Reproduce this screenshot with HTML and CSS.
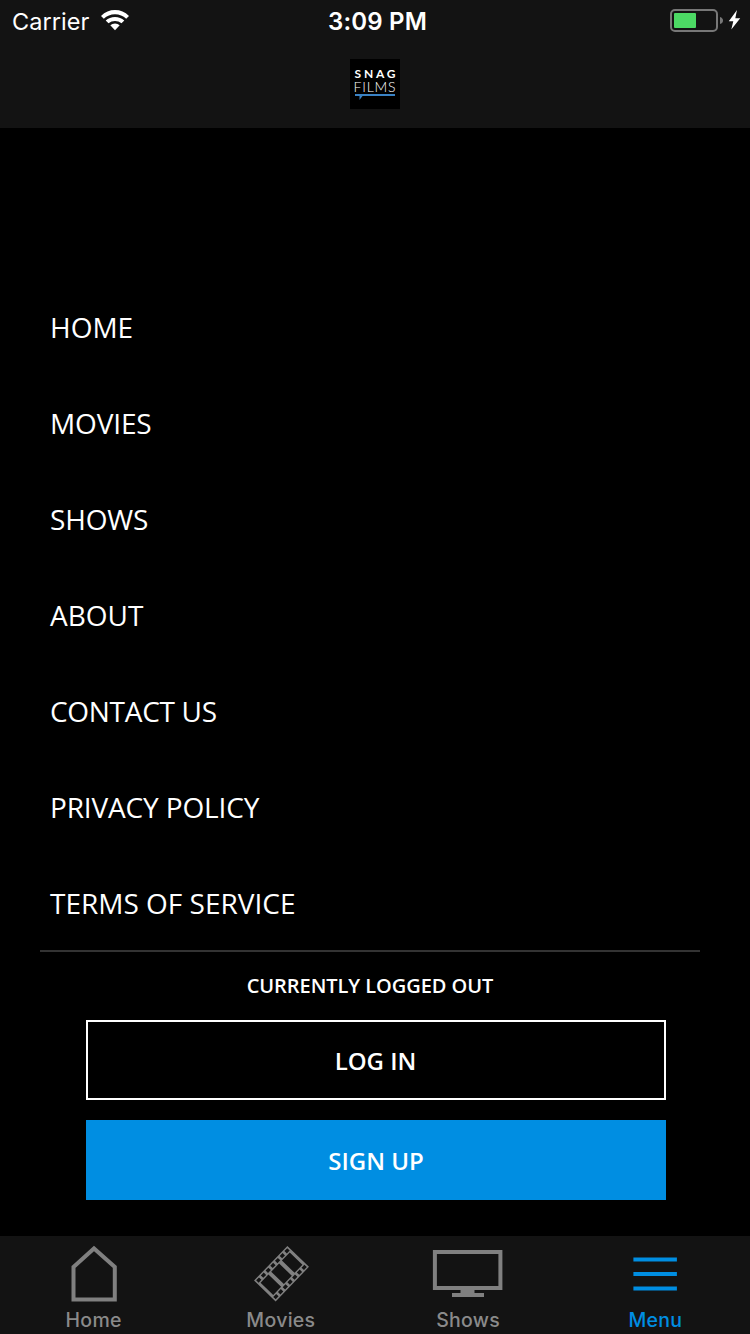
FILE: index.html
```html
<!DOCTYPE html>
<html lang="en">
<head>
<meta charset="utf-8">
<title>SnagFilms</title>
<link rel="stylesheet" href="styles.css">
</head>
<body>
<div class="app">
  <header class="header">
    <div class="status">
      <div class="status-left">
        <span class="carrier">Carrier</span>
        <svg class="wifi" width="28" height="21" viewBox="0 0 28 21">
          <path d="M0 5.9Q6 0 14 0T28 5.9L25.2 8.8Q20.500 4.300 14 4.300T2.800 8.800Z"/>
          <path d="M4.700 10.500Q8.500 7 14 7T23.300 10.500L20.500 13.300Q17.700 11 14 11T7.500 13.300Z"/>
          <path d="M9.300 15.200Q11.200 13.400 14 13.400T18.700 15.200L14 20.200Z"/>
        </svg>
      </div>
      <time class="clock">3:09 PM</time>
      <svg class="battery" width="72" height="24" viewBox="0 0 72 24">
        <rect class="battery-case" x="1" y="1" width="46" height="21" rx="4"/>
        <rect class="battery-level" x="4" y="4" width="22" height="15" rx="1"/>
        <path class="battery-tip" d="M50 8Q53 9 53 11.500T50 15Z"/>
        <path class="bolt" d="M67 1L58.800 12.300H63.300L61.300 20.500L70.200 9.300H65.300Z"/>
      </svg>
    </div>
    <svg class="logo" width="50" height="50" viewBox="0 0 50 50">
      <rect width="50" height="50"/>
      <text class="logo-snag" x="4.500" y="19" textLength="41">SNAG</text>
      <text class="logo-films" x="3.500" y="32.800" textLength="42">FILMS</text>
      <path d="M5 35H45V37H12.500L9.500 41V37H5Z"/>
    </svg>
  </header>
  <main class="content">
    <nav class="menu">
      <a class="menu-item home">HOME</a>
      <a class="menu-item movies">MOVIES</a>
      <a class="menu-item shows">SHOWS</a>
      <a class="menu-item about">ABOUT</a>
      <a class="menu-item contact">CONTACT US</a>
      <a class="menu-item privacy">PRIVACY POLICY</a>
      <a class="menu-item terms">TERMS OF SERVICE</a>
    </nav>
    <section class="account">
      <p class="account-state">CURRENTLY LOGGED OUT</p>
      <button class="button login">LOG IN</button>
      <button class="button signup">SIGN UP</button>
    </section>
  </main>
  <nav class="tabs">
    <a class="tab">
      <svg class="tab-icon" width="80" height="60" viewBox="0 0 80 60">
        <path class="stroke house" d="M19.500 25L40 6.500L60.800 25V57.500H19.500Z"/>
      </svg>
      <span class="tab-label">Home</span>
    </a>
    <a class="tab">
      <svg class="tab-icon" width="80" height="60" viewBox="0 0 80 60">
        <g transform="translate(40.500 31.700) rotate(-46)">
          <path class="film" fill-rule="evenodd" d="M-24 -15H24V15H-24Z M-21 -8.800H-9.700V8.800H-21Z M-5.700 -8.800H5.700V8.800H-5.700Z M9.700 -8.800H21V8.800H9.700Z"/>
          <path class="holes" d="M-22.400 -11.900H22.400M-22.400 11.900H22.400"/>
        </g>
      </svg>
      <span class="tab-label">Movies</span>
    </a>
    <a class="tab">
      <svg class="tab-icon" width="80" height="60" viewBox="0 0 80 60">
        <rect class="stroke screen" x="6.900" y="10" width="65.500" height="36"/>
        <path class="film" d="M32.500 47H46.500V51H56V55H24V51H32.500Z"/>
      </svg>
      <span class="tab-label">Shows</span>
    </a>
    <a class="tab active">
      <svg class="tab-icon" width="80" height="60" viewBox="0 0 80 60">
        <path class="stroke" d="M18.400 17.500H61.900M18.400 32H61.900M18.400 46.500H61.900"/>
      </svg>
      <span class="tab-label">Menu</span>
    </a>
  </nav>
</div>
</body>
</html>
```

FILE: styles.css
```css
* { box-sizing: border-box; }
body { margin: 0; background: #000; }
.app {
  display: flex;
  flex-direction: column;
  width: 750px;
  height: 1334px;
  background: #000;
  color: #fff;
  font-family: "Open Sans", sans-serif;
}
.header {
  display: flex;
  flex-direction: column;
  align-items: center;
  height: 128px;
  background: #131313;
}
.status {
  display: grid;
  grid-template-columns: 1fr auto 1fr;
  align-items: start;
  width: 100%;
  height: 59px;
  padding: 6px 8px 0 12px;
  font-family: Inter, sans-serif;
  line-height: 31px;
}
.status-left { display: flex; gap: 12px; }
.carrier { width: 77px; font-size: 23.5px; letter-spacing: 0.05px; white-space: nowrap; }
.wifi { margin-top: 4px; fill: #fff; }
.clock { font-size: 24px; font-weight: 600; letter-spacing: 0.2px; padding-left: 1px; }
.battery { justify-self: end; margin-top: 3px; }
.battery-case { fill: none; stroke: #777; stroke-width: 2; }
.battery-level { fill: #4cd964; }
.battery-tip { fill: #777; }
.bolt { fill: #fff; }
.logo { display: block; }
.logo text { fill: #fff; font-family: Lato, sans-serif; font-size: 12px; }
.logo .logo-snag { font-weight: 700; }
.logo .logo-films { font-size: 14px; font-weight: 300; }
.logo path { fill: #3a82c4; }
.content { flex: 1; padding: 152px 50px 0 40px; }
.menu { height: 672px; border-bottom: 2px solid #333; }
.menu-item {
  display: block;
  height: 96px;
  padding-left: 10px;
  font-size: 28px;
  line-height: 94px;
}
.movies, .shows, .privacy { letter-spacing: -0.15px; }
.contact { letter-spacing: -0.3px; }
.account { display: flex; flex-direction: column; width: 580px; margin-left: 46px; }
.account-state {
  margin: 0 12px 0 0;
  height: 68px;
  font-size: 20px;
  font-weight: 600;
  letter-spacing: -0.05px;
  line-height: 68px;
  text-align: center;
}
.button {
  height: 80px;
  padding: 0;
  border: 0;
  border-radius: 0;
  background: #000;
  color: #fff;
  font: 600 24px "Open Sans", sans-serif;
}
.login { border: 2px solid #fff; margin-bottom: 20px; padding: 1px 1px 0 0; }
.signup { background: #008ee2; }
.tabs {
  display: grid;
  grid-template-columns: repeat(4, 1fr);
  height: 98px;
  padding: 6px 1px 0 0;
  background: #131313;
}
.tab {
  display: flex;
  flex-direction: column;
  align-items: center;
  color: #8a8a8a;
  font: 500 19.5px/37px Inter, sans-serif;
  letter-spacing: 0.3px;
}
.tab-icon { display: block; }
.stroke { fill: none; stroke: #808080; stroke-width: 4; }
.film { fill: #808080; }
.holes { fill: none; stroke: #131313; stroke-width: 3.4; stroke-dasharray: 4.1 2.68; }
.active { color: #008ee2; }
.active .stroke { stroke: #008ee2; }
```
